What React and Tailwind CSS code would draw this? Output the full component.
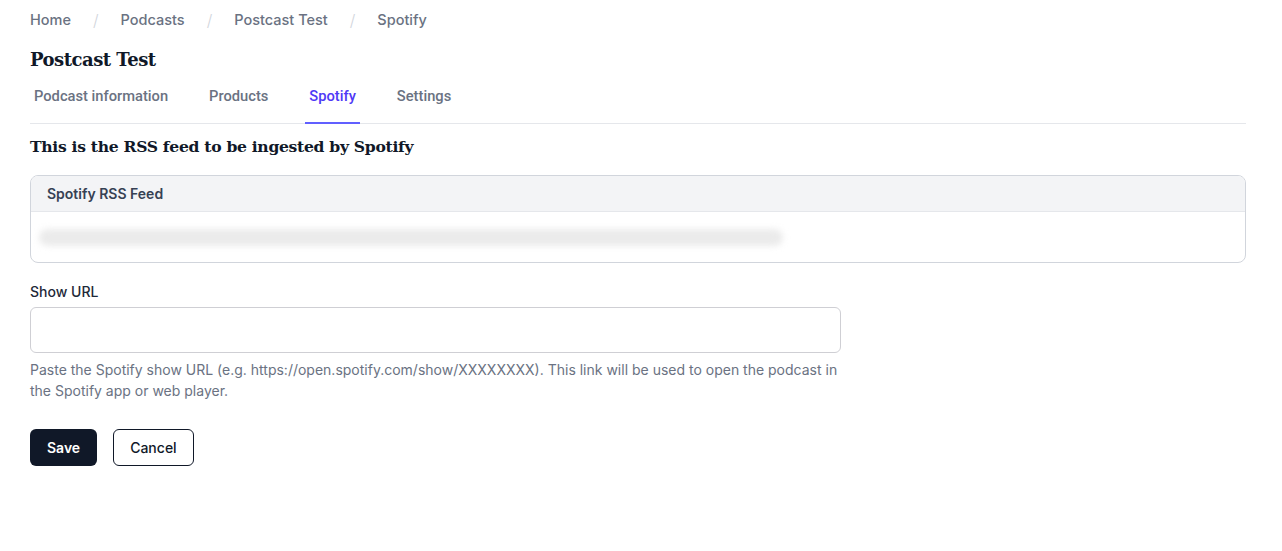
import React from 'react';

const crumbs = ["Home", "Podcasts", "Postcast Test", "Spotify"];
const tabs = ["Podcast information", "Products", "Spotify", "Settings"];

const App = () => {
  return (
    <div className="min-h-screen bg-white pl-[30px] pr-[36px] font-['Inter',sans-serif]">
      <nav className="flex items-center h-[40px] text-[14.5px] font-medium text-gray-500">
        {crumbs.map((c, i) => (
          <div key={c} className="flex items-center">
            {i > 0 && <span className="px-[22px] text-gray-300 font-light text-[16px]">/</span>}
            <span>{c}</span>
          </div>
        ))}
      </nav>
      <h1 className="mt-[7px] text-[18px] font-semibold leading-[26px] text-gray-900 font-['DejaVu_Serif',serif] tracking-[-0.5px]">
        Postcast Test
      </h1>
      <div className="mt-[10px] flex gap-x-[33px] border-b border-gray-200 font-['Roboto',sans-serif]">
        {tabs.map((t) => (
          <button
            key={t}
            className={
              t === "Spotify"
                ? "px-1 pt-[2px] pb-[15px] text-[14.7px] font-medium text-indigo-600 border-b-2 border-indigo-500 -mb-px"
                : "px-1 pt-[2px] pb-[15px] text-[14.7px] font-medium text-gray-500 border-b-2 border-transparent -mb-px"
            }
          >
            {t}
          </button>
        ))}
      </div>
      <h2 className="mt-[11px] text-[15.6px] font-bold leading-[24px] text-gray-900 font-['DejaVu_Serif',serif] tracking-[-0.3px]">
        This is the RSS feed to be ingested by Spotify
      </h2>
      <div className="mt-[16px] rounded-lg border border-gray-300 overflow-hidden">
        <div className="h-[36px] flex items-center px-4 bg-gray-100 border-b border-gray-200 text-[14px] font-semibold text-gray-700">
          Spotify RSS Feed
        </div>
        <div className="h-[50px] flex items-center px-[8px]">
          <div className="h-[17px] w-[744px] rounded-full bg-[#ebebeb] blur-[3px]" />
        </div>
      </div>
      <div className="mt-[19px] w-[811px]">
        <label className="block text-[14px] font-medium text-gray-800 leading-[20px]">Show URL</label>
        <input type="text" className="mt-[5px] block w-full h-[46px] rounded-md border border-[#cfcfd4] px-3 text-sm outline-none" />
        <p className="mt-[6px] text-[14px] leading-[21px] text-gray-500">
          Paste the Spotify show URL (e.g. https://open.spotify.com/show/XXXXXXXX). This link will be used to open the podcast in the Spotify app or web player.
        </p>
      </div>
      <div className="mt-[28px] flex gap-4">
        <button className="h-[37px] px-[17px] rounded-md bg-gray-900 text-white text-[14px] font-semibold">Save</button>
        <button className="h-[37px] px-[16px] rounded-md border border-gray-900 bg-white text-gray-900 text-[14px] font-medium">Cancel</button>
      </div>
    </div>
  );
};

export default App;
